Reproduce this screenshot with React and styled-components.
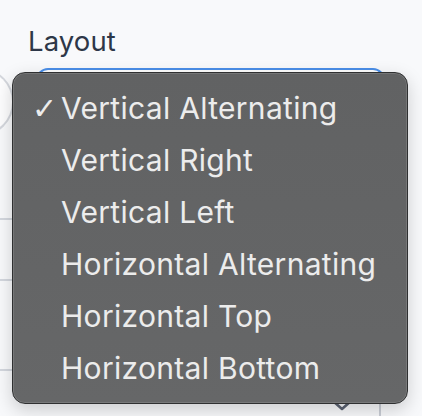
import React from "react";
import styled, { createGlobalStyle } from "styled-components";

const Global = createGlobalStyle`
  html, body { margin: 0; padding: 0; }
  body {
    background: #f8f9fb;
    font-family: Inter, "Noto Sans", "Liberation Sans", sans-serif;
    width: 422px;
    height: 416px;
    overflow: hidden;
  }
`;

const Page = styled.div`
  position: relative;
  width: 422px;
  height: 416px;
  overflow: hidden;
`;

const Form = styled.div`
  display: flex;
  flex-direction: column;
  padding-top: 24px;
`;

const Label = styled.div`
  padding-left: 28px;
  font-size: 27.5px;
  line-height: 34px;
  color: #2d3748;
  letter-spacing: 0.1px;
`;

const SelectRow = styled.div`
  display: flex;
  align-items: stretch;
  margin-top: 10px;
  height: 68px;
  gap: 22px;
`;

const SideButton = styled.div`
  width: 30px;
  margin-left: -20px;
  border: 2px solid #d4d7dd;
  border-radius: 0 34px 34px 0;
  background: #fdfdfe;
`;

const Select = styled.div`
  width: 345px;
  border: 2px solid #4a8ee8;
  border-radius: 12px;
  background: #ffffff;
`;

const List = styled.div`
  display: flex;
  flex-direction: column;
  margin-top: 82px;
`;

const ListRow = styled.div`
  height: ${(p) => p.$h}px;
  border-top: 2px solid #d3d7de;
  width: 380px;
  box-sizing: border-box;
`;

const Footer = styled.div`
  display: flex;
  justify-content: flex-end;
  width: 381px;
  height: 46px;
  border-right: 2px solid #c9cdd5;
  box-sizing: border-box;
`;

const Chevron = styled.svg`
  margin-right: 26px;
  margin-top: 0px;
`;

const Menu = styled.div`
  position: absolute;
  left: 12px;
  top: 72px;
  width: 396px;
  height: 332px;
  box-sizing: border-box;
  padding-top: 9px;
  background: linear-gradient(180deg, #616263 0%, #666768 100%);
  border: 1px solid #2f3031;
  border-radius: 13px;
  box-shadow: inset 0 0 0 1px rgba(255, 255, 255, 0.12), 0 6px 18px rgba(0, 0, 0, 0.18);
  display: flex;
  flex-direction: column;
`;

const Item = styled.div`
  display: flex;
  align-items: center;
  height: 52px;
  color: #ececec;
  font-size: 30px;
  letter-spacing: 0.3px;
`;

const Check = styled.span`
  width: 48px;
  padding-left: 19px;
  box-sizing: border-box;
  font-size: 30px;
  font-family: "DejaVu Sans", sans-serif;
  color: #ececec;
`;

const items = [
  "Vertical Alternating",
  "Vertical Right",
  "Vertical Left",
  "Horizontal Alternating",
  "Horizontal Top",
  "Horizontal Bottom",
];

export default function App() {
  return (
    <Page>
      <Global />
      <Form>
        <Label>Layout</Label>
        <SelectRow>
          <SideButton />
          <Select />
        </SelectRow>
        <List>
          <ListRow $h={61} />
          <ListRow $h={90} />
          <ListRow $h={30} />
        </List>
        <Footer>
          <Chevron width="22" height="12" viewBox="0 0 22 12">
            <polyline points="2,2 11,10 20,2" fill="none" stroke="#5b6272" strokeWidth="2.6" strokeLinecap="round" strokeLinejoin="round" />
          </Chevron>
        </Footer>
      </Form>
      <Menu>
        {items.map((t, i) => (
          <Item key={t}>
            <Check>{i === 0 ? "✓" : ""}</Check>
            {t}
          </Item>
        ))}
      </Menu>
    </Page>
  );
}
